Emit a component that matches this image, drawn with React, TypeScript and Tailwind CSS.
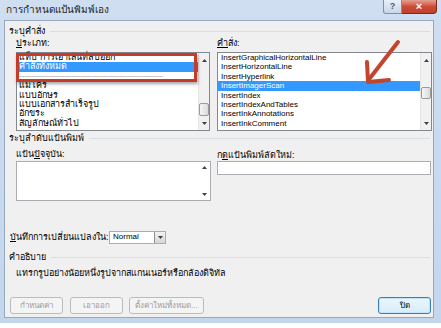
import React from 'react';

const dashes = '-'.repeat(80);

const leftItems = [
  'แท็บ การเอาเส้นที่ลบออก',
  'คำสั่งทั้งหมด',
  dashes,
  'แมโคร',
  'แบบอักษร',
  'แบบเอกสารสำเร็จรูป',
  'อักขระ',
  'สัญลักษณ์ทั่วไป',
];

const rightItems = [
  'InsertGraphicalHorizontalLine',
  'InsertHorizontalLine',
  'InsertHyperlink',
  'InsertImagerScan',
  'InsertIndex',
  'InsertIndexAndTables',
  'InsertInkAnnotations',
  'InsertInkComment',
];

function Tri({ up }: { up?: boolean }) {
  return (
    <svg width="5" height="3" viewBox="0 0 5 3">
      <path d={up ? 'M0 3 L2.5 0 L5 3 Z' : 'M0 0 L5 0 L2.5 3 Z'} fill="#404040" />
    </svg>
  );
}

function ScrollBar({ thumb }: { thumb?: string }) {
  return (
    <div className="relative w-[11px] h-full shrink-0 bg-[#f1f1f1] border-l border-[#e4e4e4] flex flex-col">
      <div className="h-[14px] flex items-center justify-center">
        <Tri up />
      </div>
      <div className="flex-1" />
      <div className="h-[14px] flex items-center justify-center">
        <Tri />
      </div>
      {thumb && (
        <div
          className={`absolute left-0 right-0 rounded-[2px] border border-[#9a9a9a] bg-gradient-to-r from-[#f6f6f6] to-[#dadada] ${thumb}`}
        />
      )}
    </div>
  );
}

function SectionHead({ label }: { label: string }) {
  return (
    <div className="h-[12px] ml-[4px] mr-[3px] flex items-center gap-[5px]">
      <span className="leading-none">{label}</span>
      <div className="flex-1 h-px bg-[#dadde2]" />
    </div>
  );
}

function Btn({ label, w, disabled, focus }: { label: string; w: string; disabled?: boolean; focus?: boolean }) {
  return (
    <div
      className={`${w} h-[17px] rounded-[3px] flex items-center justify-center text-[8px] whitespace-nowrap ${
        disabled
          ? 'border border-[#b9bcbf] bg-[#f4f4f4] text-[#9d9d9d]'
          : focus
          ? 'border border-[#3c7fb1] bg-gradient-to-b from-[#eaf6fd] to-[#d9ecf8] shadow-[inset_0_0_0_1px_#bfe3f9] text-black'
          : 'border border-[#707070] bg-gradient-to-b from-[#f2f2f2] to-[#dcdcdc] text-black'
      }`}
    >
      {label}
    </div>
  );
}

export default function App() {
  return (
    <div className="w-[441px] h-[328px] overflow-hidden relative bg-white text-black text-[9px] font-['Tahoma','Liberation_Sans','Noto_Sans',sans-serif]">
      <div className="h-[323px] flex flex-col bg-gradient-to-b from-[#cfdef0] to-[#c3d6ec]">
        {/* title bar */}
        <div className="h-[20px] shrink-0 relative flex items-center pl-[6px]">
          <span className="text-[10px] text-[#1e1e1e] leading-none">การกำหนดแป้นพิมพ์เอง</span>
          <div className="absolute top-0 right-[4px] flex">
            <div className="w-[19px] h-[14px] rounded-bl-[3px] border border-[#7e8fa8] border-t-0 bg-gradient-to-b from-[#e9f0f8] to-[#c8d6e8] flex items-center justify-center text-[9px] font-bold text-[#4d5d75] leading-none">
              ?
            </div>
            <div className="w-[35px] h-[14px] rounded-br-[4px] border border-[#7b2a22] border-t-0 border-l-0 bg-gradient-to-b from-[#e3a092] via-[#cd4c38] to-[#c0402c] flex items-center justify-center text-[11px] font-bold text-white leading-none">
              ×
            </div>
          </div>
        </div>

        {/* client */}
        <div className="flex-1 min-h-0 flex pl-[4px] pr-[7px] pb-[5px]">
          <div className="flex-1 border border-[#95a8c0] bg-[#f0f0f0] flex flex-col">
            <div className="mt-[4px]">
              <SectionHead label="ระบุคำสั่ง" />
            </div>

            <div className="grid grid-cols-[194px_215px] gap-x-[7px] ml-[11px]">
              <div className="h-[12px] flex items-center leading-none">
                <span>
                  <span className="underline">ป</span>ระเภท:
                </span>
              </div>
              <div className="h-[12px] flex items-center leading-none">
                <span>
                  <span className="underline">คำ</span>สั่ง:
                </span>
              </div>

              {/* categories */}
              <div className="relative mt-[3px] h-[79px] border border-[#828790] bg-white flex">
                <div className="flex-1 min-w-0">
                  {leftItems.map((t, i) =>
                    i === 2 ? (
                      <div key={i} className="h-[9.4px] pl-[2px] flex items-center">
                        <span className="whitespace-nowrap text-[6px] leading-none text-[#666] tracking-[-0.2px]">
                          {t}
                        </span>
                      </div>
                    ) : (
                      <div
                        key={i}
                        className={`h-[9.4px] leading-[9.4px] pl-[2px] whitespace-nowrap ${
                          i === 1 ? 'bg-[#3399ff] text-white' : ''
                        }`}
                      >
                        {t}
                      </div>
                    )
                  )}
                </div>
                <ScrollBar thumb="top-[50px] h-[13px]" />
                <div className="absolute left-[-1px] top-0 w-[181px] h-[29px] border-[3px] border-[#c43b2b] shadow-[1px_2px_3px_rgba(0,0,0,0.35)]" />
              </div>

              {/* commands */}
              <div className="mt-[3px] h-[79px] border border-[#828790] bg-white flex">
                <div className="flex-1 min-w-0 text-[8px]">
                  {rightItems.map((t, i) => (
                    <div
                      key={t}
                      className={`h-[9.4px] leading-[9.4px] pl-[3px] whitespace-nowrap ${
                        i === 3 ? 'bg-[#3399ff] text-white' : ''
                      }`}
                    >
                      {t}
                    </div>
                  ))}
                </div>
                <ScrollBar thumb="top-[34px] h-[12px]" />
              </div>
            </div>

            <div className="mt-[1px]">
              <SectionHead label="ระบุลำดับแป้นพิมพ์" />
            </div>

            <div className="grid grid-cols-[195px_214px] gap-x-[6px] ml-[11px] mt-[4px] items-start">
              <div className="h-[12px] flex items-center leading-none">
                <span>
                  แป้น<span className="underline">ป</span>ัจจุบัน:
                </span>
              </div>
              <div className="h-[12px] flex items-end leading-none">
                <span>
                  ก<span className="underline">ด</span>แป้นพิมพ์ลัดใหม่:
                </span>
              </div>
              <div className="mt-[1px] h-[40px] border border-[#abadb3] bg-white flex justify-end">
                <div className="w-[11px] h-full flex flex-col justify-between py-[4px] items-center">
                  <Tri up />
                  <Tri />
                </div>
              </div>
              <div className="mt-[1px] h-[14px] border border-[#abadb3] bg-white" />
            </div>

            {/* save in */}
            <div className="mt-[29px] h-[14px] ml-[5px] flex items-center">
              <div className="w-[99px] leading-none">
                <span className="underline">บ</span>ันทึกการเปลี่ยนแปลงใน:
              </div>
              <div className="w-[57px] h-[13px] border border-[#abadb3] bg-white flex items-center">
                <span className="flex-1 pl-[3px] text-[8px] leading-none">Normal</span>
                <div className="w-[11px] h-full border-l border-[#8e8f8f] bg-gradient-to-b from-[#f2f2f2] to-[#d6d6d6] flex items-center justify-center">
                  <Tri />
                </div>
              </div>
            </div>

            <div className="mt-[7px]">
              <SectionHead label="คำอธิบาย" />
            </div>
            <div className="mt-[4px] h-[12px] ml-[11px] flex items-center leading-none">
              แทรกรูปอย่างน้อยหนึ่งรูปจากสแกนเนอร์หรือกล้องดิจิทัล
            </div>

            {/* buttons */}
            <div className="mt-[18px] ml-[5px] mr-[2px] flex items-center">
              <Btn label="กำหนดค่า" w="w-[53px]" disabled />
              <div className="w-[7px]" />
              <Btn label="เอาออก" w="w-[53px]" disabled />
              <div className="w-[6px]" />
              <Btn label="ตั้งค่าใหม่ทั้งหมด..." w="w-[75px]" disabled />
              <div className="flex-1" />
              <Btn label="ปิด" w="w-[53px]" focus />
            </div>
          </div>
        </div>
      </div>

      {/* arrow pointing at the selected command */}
      <svg className="absolute left-[358px] top-[36px]" width="48" height="52" viewBox="0 0 48 52">
        <g stroke="#c2452d" strokeWidth="4" strokeLinecap="round" strokeLinejoin="round" fill="none">
          <path d="M40 6 L12 42" />
          <path d="M9 26 L10 46 L31 44" />
        </g>
      </svg>
    </div>
  );
}
